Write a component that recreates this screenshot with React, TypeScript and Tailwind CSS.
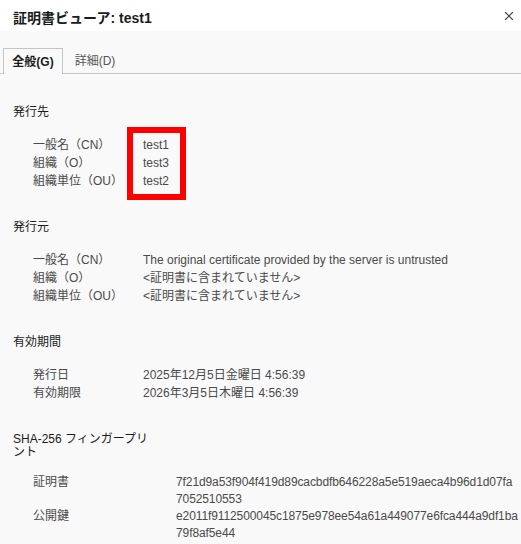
import * as React from "react"
import { X } from "lucide-react"

const font = { fontFamily: '"Liberation Sans", "Noto Sans CJK JP", sans-serif' }

type Row = { label: string; value: string }

function Section({
  title,
  rows,
  highlight = false,
}: {
  title: string
  rows: Row[]
  highlight?: boolean
}) {
  return (
    <section className="mb-[31px]">
      <h3 className="text-[12px] leading-[13px] text-[#1b1b1b] w-[110px] mb-[17px]">{title}</h3>
      <div className="flex pl-[20px]">
        <div className="w-[110px] shrink-0">
          {rows.map((r) => (
            <div key={r.label} className="text-[12px] leading-[18px] text-[#4a4a4a]">
              {r.label}
            </div>
          ))}
        </div>
        {highlight ? (
          <div className="relative">
            {/* 赤枠 */}
            <div className="absolute -left-[16px] -top-[9px] w-[59px] h-[73px] border-[6px] border-[#ff0000]" />
            {rows.map((r) => (
              <div key={r.label} className="text-[12px] leading-[18px] text-[#4a4a4a]">
                {r.value}
              </div>
            ))}
          </div>
        ) : (
          <div className="flex-1 min-w-0">
            {rows.map((r) => (
              <div key={r.label} className="text-[12px] leading-[18px] text-[#4a4a4a] break-all">
                {r.value}
              </div>
            ))}
          </div>
        )}
      </div>
    </section>
  )
}

// ハッシュ値はダイアログと同じ位置で折り返す
function Hash({ value }: { value: string }) {
  return (
    <div className="whitespace-nowrap tracking-[-0.1px]">
      <div>{value.slice(0, 54)}</div>
      <div>{value.slice(54)}</div>
    </div>
  )
}

export default function App() {
  return (
    <div className="w-[521px] h-[544px] overflow-hidden bg-[#f9f9f9]" style={font}>
      <div className="h-[31px] bg-white flex items-center justify-between pl-[13px] pr-[5px]">
        <h1 className="text-[14px] font-bold text-[#1b1b1b] pt-[5px]">証明書ビューア: test1</h1>
        <X className="w-[14px] h-[14px] text-[#444]" strokeWidth={2} />
      </div>

      <div className="pt-[17px] px-[3px] border-b border-[#c4c4c4] flex">
        <div className="w-[60px] h-[26px] -mb-px border border-b-0 border-[#c4c4c4] bg-[#f9f9f9] flex items-center justify-center text-[12px] font-bold text-[#1b1b1b]">
          全般(G)
        </div>
        <div className="w-[64px] h-[25px] flex items-center justify-center text-[12px] text-[#555]">
          詳細(D)
        </div>
      </div>

      <div className="pl-[13px] pr-[4px] pt-[32px]">
        <Section
          title="発行先"
          highlight
          rows={[
            { label: "一般名（CN）", value: "test1" },
            { label: "組織（O）", value: "test3" },
            { label: "組織単位（OU）", value: "test2" },
          ]}
        />
        <Section
          title="発行元"
          rows={[
            { label: "一般名（CN）", value: "The original certificate provided by the server is untrusted" },
            { label: "組織（O）", value: "<証明書に含まれていません>" },
            { label: "組織単位（OU）", value: "<証明書に含まれていません>" },
          ]}
        />
        <Section
          title="有効期間"
          rows={[
            { label: "発行日", value: "2025年12月5日金曜日 4:56:39" },
            { label: "有効期限", value: "2026年3月5日木曜日 4:56:39" },
          ]}
        />
        <section>
          <h3 className="text-[12px] leading-[13px] text-[#1b1b1b] w-[140px] mb-[15px]">SHA-256 フィンガープリント</h3>
          <div className="pl-[20px] grid grid-cols-[143px_1fr] text-[12px] leading-[17px] text-[#4a4a4a]">
            <div>証明書</div>
            <Hash value="7f21d9a53f904f419d89cacbdfb646228a5e519aeca4b96d1d07fa7052510553" />
            <div>公開鍵</div>
            <Hash value="e2011f9112500045c1875e978ee54a61a449077e6fca444a9df1ba79f8af5e44" />
          </div>
        </section>
      </div>
    </div>
  )
}
